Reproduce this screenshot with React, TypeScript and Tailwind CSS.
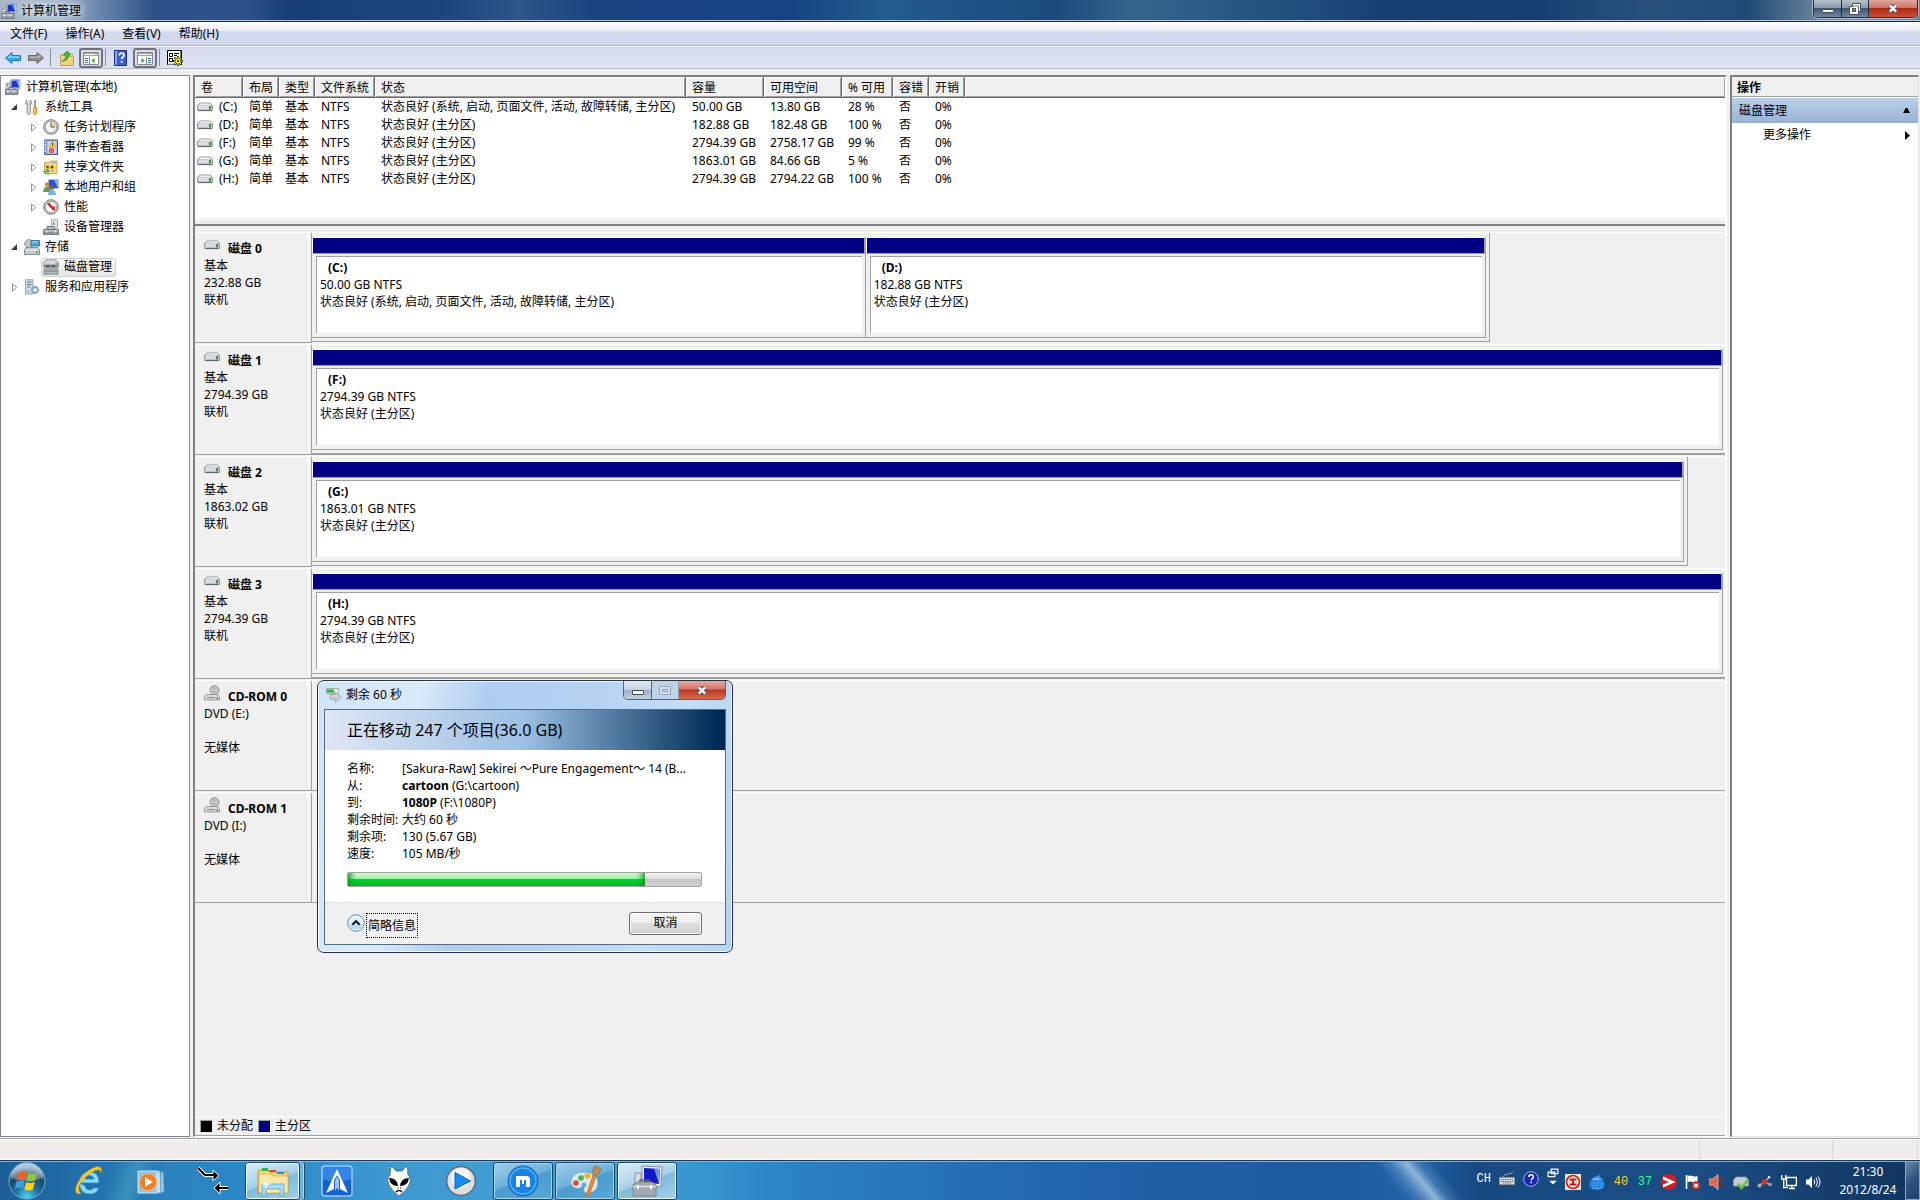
import type { ReactNode } from 'react'
import { clsx } from 'clsx'

interface Volume {
  letter: string
  fs: string
  status: string
  capacity: string
  free: string
  percent: string
}

interface Partition {
  letter: string
  size: string
  status: string
  weight: number
}

interface Disk {
  name: string
  lines: string[]
  width?: number
  partitions?: Partition[]
}

interface TreeNode {
  label: string
  icon: ReactNode
  level: 0 | 1 | 2
  toggle?: 'open' | 'closed'
  selected?: boolean
}

const SYSTEM_STATUS = '状态良好 (系统, 启动, 页面文件, 活动, 故障转储, 主分区)'
const PRIMARY_STATUS = '状态良好 (主分区)'

const volumes: Volume[] = [
  { letter: '(C:)', fs: 'NTFS', status: SYSTEM_STATUS, capacity: '50.00 GB', free: '13.80 GB', percent: '28 %' },
  { letter: '(D:)', fs: 'NTFS', status: PRIMARY_STATUS, capacity: '182.88 GB', free: '182.48 GB', percent: '100 %' },
  { letter: '(F:)', fs: 'NTFS', status: PRIMARY_STATUS, capacity: '2794.39 GB', free: '2758.17 GB', percent: '99 %' },
  { letter: '(G:)', fs: 'NTFS', status: PRIMARY_STATUS, capacity: '1863.01 GB', free: '84.66 GB', percent: '5 %' },
  { letter: '(H:)', fs: 'NTFS', status: PRIMARY_STATUS, capacity: '2794.39 GB', free: '2794.22 GB', percent: '100 %' },
]

const columns = [
  { title: '卷', width: 'w-12' },
  { title: '布局', width: 'w-9' },
  { title: '类型', width: 'w-9' },
  { title: '文件系统', width: 'w-[60px]' },
  { title: '状态', width: 'w-[311px]' },
  { title: '容量', width: 'w-[78px]' },
  { title: '可用空间', width: 'w-[78px]' },
  { title: '% 可用', width: 'w-[51px]' },
  { title: '容错', width: 'w-9' },
  { title: '开销', width: 'w-9' },
  { title: '', width: '' },
]

const disks: Disk[] = [
  {
    name: '磁盘 0',
    lines: ['基本', '232.88 GB', '联机'],
    width: 83.4,
    partitions: [
      { letter: '(C:)', size: '50.00 GB NTFS', status: SYSTEM_STATUS, weight: 553 },
      { letter: '(D:)', size: '182.88 GB NTFS', status: PRIMARY_STATUS, weight: 620 },
    ],
  },
  {
    name: '磁盘 1',
    lines: ['基本', '2794.39 GB', '联机'],
    width: 100,
    partitions: [{ letter: '(F:)', size: '2794.39 GB NTFS', status: PRIMARY_STATUS, weight: 1 }],
  },
  {
    name: '磁盘 2',
    lines: ['基本', '1863.02 GB', '联机'],
    width: 97.4,
    partitions: [{ letter: '(G:)', size: '1863.01 GB NTFS', status: PRIMARY_STATUS, weight: 1 }],
  },
  {
    name: '磁盘 3',
    lines: ['基本', '2794.39 GB', '联机'],
    width: 100,
    partitions: [{ letter: '(H:)', size: '2794.39 GB NTFS', status: PRIMARY_STATUS, weight: 1 }],
  },
  { name: 'CD-ROM 0', lines: ['DVD (E:)', '', '无媒体'] },
  { name: 'CD-ROM 1', lines: ['DVD (I:)', '', '无媒体'] },
]

/* ---------- icons ---------- */

function Icon({ children, className = 'size-4', box = 16 }: { children: ReactNode; className?: string; box?: number }) {
  return (
    <svg viewBox={`0 0 ${box} ${box}`} className={clsx('shrink-0', className)} aria-hidden="true">
      {children}
    </svg>
  )
}

function ComputerIcon() {
  return (
    <Icon>
      <path d="M5.500 .8 15 .2v9.800L5.500 9z" fill="#e4e6ea" stroke="#8b929c" strokeWidth=".7" />
      <path d="M6.500 1.700 14 1.200v7.600L6.500 8z" fill="#1a35d0" />
      <path d="M11 1.400l3-.2v7.600z" fill="#6fa0f5" />
      <path d="M1 4h4v6H1z" fill="#d5d7da" stroke="#8b8f96" strokeWidth=".7" />
      <path d="M2 5h1v2H2z" fill="#36b536" />
      <path d="M0 10.500h13v5H0z" fill="#8e979e" stroke="#6b747b" strokeWidth=".8" />
      <path d="M1 12h11" stroke="#dde3e6" />
      <path d="M3 11.500v2M9 11.500v2" stroke="#fff" />
      <path d="M4 10V8.500h5V10" fill="none" stroke="#6b747b" />
    </Icon>
  )
}

function ToolsIcon() {
  return (
    <Icon>
      <path d="M3 1v3l1.500 1.500L6 4V1c2 1 2 4 .5 5.500V14c0 2-3.500 2-3.500 0V6.500C1 5 1.500 2 3 1z" fill="#d3d6d9" stroke="#7b8186" strokeWidth=".8" />
      <path d="M10.500 1h1v7h-1z" fill="#a9adb1" stroke="#7b8186" strokeWidth=".6" />
      <rect x="9.300" y="8" width="3.500" height="7.500" rx="1.400" fill="#f6b21c" stroke="#b97b0d" strokeWidth=".7" />
      <path d="M10.300 9v5.500" stroke="#ffe48c" strokeWidth=".8" />
    </Icon>
  )
}

function ClockIcon() {
  return (
    <Icon>
      <circle cx="8" cy="8" r="7.300" fill="#d4d5d8" stroke="#75797e" />
      <circle cx="8" cy="8" r="5.600" fill="#f4f8fb" stroke="#8d9298" strokeWidth=".8" />
      <path d="M8 8V2.700A5.300 5.300 0 0 1 13.300 8z" fill="#fbd58b" />
      <path d="M8 3.500V8h4" fill="none" stroke="#4c5a6b" />
    </Icon>
  )
}

function EventIcon() {
  return (
    <Icon>
      <path d="M1.500 1h13v14.500h-13z" fill="#8ea2c8" stroke="#4b6090" />
      <path d="M4.500 2h9v12.500h-9z" fill="#c6d3ea" />
      <path d="M1 3h2M1 6h2M1 9h2M1 12h2" stroke="#fff" />
      <path d="M9.500 2 12.500 8h-6z" fill="#ffd32a" stroke="#c49200" strokeWidth=".5" />
      <path d="M9.500 4v2.500" stroke="#333" strokeWidth=".9" />
      <circle cx="8.500" cy="11.500" r="2.500" fill="#e03a2f" />
      <path d="m7.500 10.500 2 2m0-2-2 2" stroke="#fff" strokeWidth=".8" />
    </Icon>
  )
}

function SharedIcon() {
  return (
    <Icon>
      <path d="M1.500 3.500h5l1-1.500h6.500v12.500H1.500z" fill="#f6d777" stroke="#c39a3b" strokeWidth=".8" />
      <path d="M8.500 3.500h4.500" stroke="#6ba7df" />
      <circle cx="4.500" cy="8" r="1.600" fill="#8d5a2a" />
      <circle cx="9" cy="8" r="1.600" fill="#6e4520" />
      <path d="M2.500 13c0-4 4-4 4 0z" fill="#3fae4b" />
      <path d="M7 13c0-4 4.500-4 4.500 0z" fill="#b9c0c9" />
      <path d="M0 12c2 2 3 3 6 3" fill="none" stroke="#4bb26c" strokeWidth="1.500" />
    </Icon>
  )
}

function UsersIcon() {
  return (
    <Icon>
      <path d="M5.500.5h10v9h-10z" fill="#2b54d6" stroke="#b9bec6" />
      <path d="M11 1h4v8z" fill="#86aef2" />
      <circle cx="4" cy="5.500" r="2.200" fill="#c98d4a" />
      <path d="M0 13c0-7 8-7 8 0z" fill="#6c9a55" />
      <circle cx="9" cy="8.500" r="2.200" fill="#8a6238" />
      <path d="M5 16c0-7 8-7 8 0z" fill="#7db1ea" />
    </Icon>
  )
}

function PerformanceIcon() {
  return (
    <Icon>
      <circle cx="8" cy="8" r="7.300" fill="#d0d1d4" stroke="#75797d" />
      <circle cx="8" cy="8" r="5.600" fill="#fff" stroke="#8b8f94" strokeWidth=".8" />
      <path d="M4.500 5 6 4.500 10 9l1-1 .5 3.500" fill="none" stroke="#d3201b" strokeWidth="1.500" />
      <path d="m5 5 5.500 6" stroke="#d3201b" strokeWidth="1.200" />
    </Icon>
  )
}

function DeviceIcon() {
  return (
    <Icon>
      <path d="M8.500 .8h6V9h-6z" fill="#e8ebed" stroke="#8f959b" strokeWidth=".8" />
      <path d="M10 3h1.500v3H10z" fill="#45ad45" />
      <path d="M4 7.500h7l1 3H3z" fill="#b6bcc2" stroke="#636b73" strokeWidth=".8" />
      <path d="M.5 10.500h15v5H.5z" fill="#87929b" stroke="#636b73" strokeWidth=".8" />
      <path d="M1 12h14" stroke="#d8dfe4" />
      <path d="M4 11.500v2M12 11.500v2" stroke="#fff" />
    </Icon>
  )
}

function StorageIcon() {
  return (
    <Icon>
      <circle cx="4.800" cy="4.800" r="4.200" fill="#c4c9cd" stroke="#82898f" strokeWidth=".8" />
      <circle cx="4.800" cy="4.800" r="1.200" fill="#fff" stroke="#82898f" strokeWidth=".6" />
      <path d="M7 1.500h8.500v5.500H7z" fill="#41a6dc" stroke="#226a94" strokeWidth=".8" />
      <path d="M8 3h6" stroke="#b9e5fb" />
      <path d="M2 8.500h12l1.500 2.500v4.500H.5V11z" fill="#c5cacf" stroke="#70777d" strokeWidth=".8" />
      <path d="M1 11h14" stroke="#f4f5f6" />
      <path d="M12 12h2v2h-2z" fill="#3ec43e" />
    </Icon>
  )
}

function DiskManagementIcon() {
  return (
    <Icon>
      <path d="M3 .8h10l2.500 3v4H.5v-4z" fill="#d4d7da" stroke="#888e93" strokeWidth=".8" />
      <path d="M12.500 4h2v1.500h-2z" fill="#3ec43e" />
      <path d="M.5 5.500h15v3H.5z" fill="#8c9398" />
      <path d="M3 7h3.500m2 0H12" stroke="#222" strokeWidth="1.200" />
      <path d="M2 9h12l1 2v4.200H1V11z" fill="#b3b8bb" stroke="#777d82" strokeWidth=".8" />
      <path d="M1.500 12h13" stroke="#777d82" />
    </Icon>
  )
}

function ServicesIcon() {
  return (
    <Icon>
      <path d="M1.500.7h7.500V15h-7.500z" fill="#d4dbe2" stroke="#8a949e" strokeWidth=".8" />
      <path d="M3 3h4.500M3 5.500h4.500M3 8h3" stroke="#65717d" />
      <path d="M3 12.500h2" stroke="#3ec43e" />
      <circle cx="11" cy="11" r="2.800" fill="#fff" stroke="#7fa6cc" strokeWidth="2" />
      <path d="M11 6.500v2m0 5v2M6.500 11h2m5 0h2M7.800 7.800l1.400 1.400m3.600 3.600 1.400 1.400m0-6.400-1.400 1.400m-3.600 3.600-1.400 1.400" stroke="#7fa6cc" strokeWidth="1.200" />
    </Icon>
  )
}

function DriveIcon() {
  return (
    <Icon>
      <path d="M3 4h10l2.500 2.500v4.200q0 1-1 1h-13q-1 0-1-1V6.500z" fill="#bfc0c8" stroke="#808089" strokeWidth=".8" />
      <path d="M3.300 4.500h9.400l1.800 1.800h-13z" fill="#f1f1f3" />
      <path d="M1.500 7h10v3h-10z" fill="#dcdce6" />
      <path d="M12 7h2v3.500h-2z" fill="#35a033" />
      <path d="M1 11.500h14" stroke="#63636c" strokeWidth=".9" />
    </Icon>
  )
}

function OpticalIcon() {
  return (
    <Icon>
      <circle cx="10.500" cy="5" r="4.500" fill="#c9c9cf" stroke="#85858c" strokeWidth=".8" />
      <path d="m10.500 5 2-4M10.500 5l4 1.500" stroke="#b4a6d4" />
      <path d="m9 1.800 1.500 6" stroke="#6bc46b" strokeWidth="1.300" />
      <circle cx="10.500" cy="5" r="1.200" fill="#fff" stroke="#8c8c92" strokeWidth=".5" />
      <path d="M3 9.500h10.500l2 1.800v3.700H.5v-3.700z" fill="#dcdde2" stroke="#82838b" strokeWidth=".8" />
      <path d="M3 12.700h8" stroke="#6d6d75" strokeWidth=".9" />
      <path d="M12.500 12h1.600v2h-1.600z" fill="#35a033" />
    </Icon>
  )
}

function BackIcon() {
  return (
    <Icon>
      <path d="M.5 8 7 2.500V5.500h8.500v5H7v3z" fill="#35aaf2" stroke="#136fae" strokeWidth=".9" strokeLinejoin="round" />
      <path d="M2.500 7.700 6 4.800V6.500h8.500v1.200z" fill="#9bdcff" />
    </Icon>
  )
}

function ForwardIcon() {
  return (
    <Icon>
      <path d="M15.500 8 9 2.500V5.500H.5v5H9v3z" fill="#8f8f8f" stroke="#5f5f5f" strokeWidth=".9" strokeLinejoin="round" />
      <path d="M13.500 7.700 10 4.800V6.500H1.500v1.200z" fill="#b9b9b9" />
    </Icon>
  )
}

function FolderUpIcon() {
  return (
    <Icon>
      <path d="M1.500 5h5l1 1h7v9.500h-13z" fill="#f4d27a" stroke="#c09a46" strokeWidth=".9" />
      <path d="M9.500 3.500h4v2.500h-4z" fill="#fff4c4" stroke="#c09a46" strokeWidth=".6" />
      <path d="M3 11c3-1 4-3 3.500-6H4L8 1l4 4H9.500C9.500 9 7 11 3 11z" fill="#3dba3d" stroke="#1b7f1b" strokeWidth=".6" />
    </Icon>
  )
}

function PaneIcon({ flip }: { flip?: boolean }) {
  return (
    <Icon>
      <path d="M.5 2.500h15v12H.5z" fill="#fff" stroke="#868686" />
      <path d="M1 3h14v3H1z" fill="#a5a5a5" />
      <path d="M1 4.500h10m1 0h1m1 0h1" stroke="#fff" />
      {flip ? (
        <>
          <path d="M9.500 7v7" stroke="#868686" />
          <path d="M11 8.500h3M11 10.500h3M11 12.500h3" stroke="#3e6bb5" />
          <path d="M4.500 8v5l3-2.500z" fill="#23a923" />
        </>
      ) : (
        <>
          <path d="M6.500 7v7" stroke="#868686" />
          <path d="M2 8.500h3M2 10.500h3M2 12.500h3" stroke="#3e6bb5" />
          <path d="M11.500 8v5l-3-2.500z" fill="#23a923" />
        </>
      )}
    </Icon>
  )
}

function HelpIcon() {
  return (
    <Icon>
      <path d="M1.500.5h12v15h-12z" fill="#3b5fd0" stroke="#1d2f8b" />
      <path d="M2 1h2v14H2z" fill="#8ba7ef" />
      <path d="M6.300 5.500q0-2.300 2.300-2.300t2.300 2q0 1.300-1.200 2-1 .6-1 2" fill="none" stroke="#fff" strokeWidth="1.700" />
      <path d="M7.800 11h1.800v1.800H7.800z" fill="#fff" />
    </Icon>
  )
}

function SettingsIcon() {
  return (
    <Icon>
      <path d="M.5.500h14v14H.5z" fill="#fff" stroke="#000" />
      <path d="M13.500 1v13.500H1" fill="none" stroke="#808080" />
      <path d="M2.500 3.500h3v3h-3zm0 5h3v3h-3z" fill="none" stroke="#000" />
      <path d="M7 3.500h5M7 5.500h3M7 8.500h2" stroke="#000" />
      <path d="M11 6v10M6 11h10M7.500 7.500l7 7m0-7-7 7" stroke="#000" strokeWidth="2" />
      <circle cx="11" cy="11" r="3" fill="#fff200" stroke="#000" strokeWidth=".6" />
      <path d="M11 6.500v2m0 5v2M6.500 11h2m5 0h2M8 8l1 1m4 4 1 1m0-6-1 1m-4 4-1 1" stroke="#fff200" strokeWidth="1.200" />
      <circle cx="11" cy="11" r="1" fill="#000" />
    </Icon>
  )
}

const tree: TreeNode[] = [
  { label: '计算机管理(本地)', icon: <ComputerIcon />, level: 0 },
  { label: '系统工具', icon: <ToolsIcon />, level: 1, toggle: 'open' },
  { label: '任务计划程序', icon: <ClockIcon />, level: 2, toggle: 'closed' },
  { label: '事件查看器', icon: <EventIcon />, level: 2, toggle: 'closed' },
  { label: '共享文件夹', icon: <SharedIcon />, level: 2, toggle: 'closed' },
  { label: '本地用户和组', icon: <UsersIcon />, level: 2, toggle: 'closed' },
  { label: '性能', icon: <PerformanceIcon />, level: 2, toggle: 'closed' },
  { label: '设备管理器', icon: <DeviceIcon />, level: 2 },
  { label: '存储', icon: <StorageIcon />, level: 1, toggle: 'open' },
  { label: '磁盘管理', icon: <DiskManagementIcon />, level: 2, selected: true },
  { label: '服务和应用程序', icon: <ServicesIcon />, level: 1, toggle: 'closed' },
]

/* ---------- window frame ---------- */

function CloseGlyph() {
  return (
    <Icon className="h-[11px] w-3" box={12}>
      <path d="m2.500 2.500 7 7m0-7-7 7" stroke="#4b4f5c" strokeWidth="4.600" />
      <path d="m2.500 2.500 7 7m0-7-7 7" stroke="#fff" strokeWidth="2.600" />
    </Icon>
  )
}

function TitleBar() {
  return (
    <header className="flex h-[22px] shrink-0 items-start justify-between border-b border-[#1b2c48] bg-[linear-gradient(90deg,#aab9ca_0%,#a3b4c8_3%,#6e8ab0_5%,#2e5188_8%,#2c5189_13%,#173e77_15%,#1c4580_23%,#2d5689_27%,#1a4480_31%,#164380_41%,#225c90_46%,#1b4a7c_55%,#34668d_59%,#255682_65%,#164072_72%,#153f70_80%,#28527c_86%,#1f4a75_91%,#8397aa_96%,#6e7f92_100%)] shadow-[inset_0_-1px_0_#b7c8dd]">
      <div className="flex h-[21px] items-center gap-1 pl-px">
        <ComputerIcon />
        <h1 className="text-xs leading-5 [text-shadow:0_0_6px_#fff,0_0_10px_#fff]">计算机管理</h1>
      </div>
      <div className="mr-0.5 flex h-[18px] overflow-hidden rounded-b-[5px] border border-t-0 border-[#25303d] shadow-[0_0_0_1px_#a9b9c9]">
        <button type="button" aria-label="最小化" className="flex w-7 items-center justify-center border-r border-[#25303d] bg-[linear-gradient(#b9c3ce_0%,#8796a7_48%,#3f566e_50%,#7488a0_100%)]">
          <span className="mt-1 h-1 w-3 rounded-[1px] border border-[#454d5b] bg-white" />
        </button>
        <button type="button" aria-label="还原" className="flex w-[27px] items-center justify-center border-r border-[#25303d] bg-[linear-gradient(#b9c3ce_0%,#8796a7_48%,#3f566e_50%,#7488a0_100%)]">
          <Icon className="size-3" box={12}>
            <path d="M3.500.5h8v8h-2v3h-9v-8h3z" fill="#fff" stroke="#454d5b" />
            <path d="M3.500 5.500h3v3h-3z" fill="#7c8a9a" stroke="#454d5b" />
            <path d="M3 3h6.500v5.500" fill="none" stroke="#454d5b" strokeWidth=".8" />
          </Icon>
        </button>
        <button type="button" aria-label="关闭" className="flex w-12 items-center justify-center bg-[linear-gradient(#e0a69b_0%,#cd7a6b_44%,#b32a15_50%,#c9503a_100%)]">
          <CloseGlyph />
        </button>
      </div>
    </header>
  )
}

function MenuBar() {
  return (
    <nav className="flex h-6 shrink-0 items-center gap-[18px] border-b border-[#aeb0bb] bg-[linear-gradient(#fff_0%,#e8ecf6_38%,#d4daed_42%,#d4daed_100%)] pl-2.5">
      {['文件(F)', '操作(A)', '查看(V)', '帮助(H)'].map((item) => (
        <button key={item} type="button">
          {item}
        </button>
      ))}
    </nav>
  )
}

function Separator() {
  return <span className="h-[17px] w-px bg-[#8b8d98]" />
}

function ToolBar() {
  const pressed = 'flex h-5 w-6 items-center justify-center rounded-[3px] border-2 border-[#6e7280] bg-[#dcdfe8]'
  return (
    <div className="flex h-[23px] shrink-0 items-center border-t border-b border-t-[#f7f8fc] border-b-[#b3b6ca] bg-[linear-gradient(#d4daed,#dfe4f5)] pl-[5px]">
      <button type="button" aria-label="后退"><BackIcon /></button>
      <button type="button" aria-label="前进" className="ml-[7px] mr-1.5"><ForwardIcon /></button>
      <Separator />
      <button type="button" aria-label="向上" className="ml-2 mr-1"><FolderUpIcon /></button>
      <button type="button" aria-label="显示控制台树" className={pressed}><PaneIcon /></button>
      <span className="w-0.5" />
      <Separator />
      <button type="button" aria-label="帮助" className="mr-1 ml-[7px]"><HelpIcon /></button>
      <button type="button" aria-label="显示操作窗格" className={pressed}><PaneIcon flip /></button>
      <span className="w-0.5" />
      <Separator />
      <button type="button" aria-label="设置" className="ml-[7px]"><SettingsIcon /></button>
    </div>
  )
}

function ConsoleTree() {
  return (
    <aside className="w-[190px] shrink-0 border border-[#828790] bg-white pt-px">
      <ul>
        {tree.map((node) => (
          <li
            key={node.label}
            className={clsx('flex h-5 items-center', node.level === 0 && 'pl-0.5', node.level === 1 && 'pl-[5px]', node.level === 2 && 'pl-6')}
          >
            {node.level > 0 && (
              <span className="flex w-4 justify-center">
                {node.toggle === 'open' && (
                  <Icon className="size-2" box={8}>
                    <path d="M7 1v6H1z" fill="#3b3b3b" />
                  </Icon>
                )}
                {node.toggle === 'closed' && (
                  <Icon className="size-[9px]" box={9}>
                    <path d="M2.500.8v7.400L6.800 4.500z" fill="#fff" stroke="#949494" />
                  </Icon>
                )}
              </span>
            )}
            <button
              type="button"
              className={clsx(
                'flex h-[19px] items-center gap-[5px] rounded-[2px] border pl-px pr-[3px]',
                node.selected ? 'border-[#d4d4d4] bg-[linear-gradient(#f9f9f9,#e6e6e6)]' : 'border-transparent',
              )}
            >
              {node.icon}
              {node.label}
            </button>
          </li>
        ))}
      </ul>
    </aside>
  )
}

function VolumeTable() {
  return (
    <div className="h-[141px] shrink-0 bg-white">
      <table className="w-full table-fixed border-separate border-spacing-0 text-left">
        <thead>
          <tr className="h-[21px] bg-[#f0f0f0]">
            {columns.map((col, i) => (
              <th
                key={i}
                scope="col"
                className={clsx(
                  'border-b border-[#696969] p-0 font-normal shadow-[inset_1px_1px_0_#fff,inset_-1px_-1px_0_#a0a0a0]',
                  col.width,
                  col.title && 'border-r pt-0.5 pl-1.5',
                )}
              >
                <span className="whitespace-nowrap">{col.title}</span>
              </th>
            ))}
          </tr>
        </thead>
        <tbody>
          {volumes.map((v) => (
            <tr key={v.letter} className="h-[18px] whitespace-nowrap [&>td]:p-0 [&>td]:pl-1.5">
              <td>
                <span className="-ml-1 flex items-center gap-1.5">
                  <DriveIcon />
                  {v.letter}
                </span>
              </td>
              <td>简单</td>
              <td>基本</td>
              <td>{v.fs}</td>
              <td>{v.status}</td>
              <td>{v.capacity}</td>
              <td>{v.free}</td>
              <td>{v.percent}</td>
              <td>否</td>
              <td>0%</td>
              <td />
            </tr>
          ))}
        </tbody>
      </table>
    </div>
  )
}

function PartitionBox({ partition }: { partition: Partition }) {
  return (
    <div className="flex min-w-0 basis-0 flex-col" style={{ flexGrow: partition.weight }}>
      <div className="h-[17px] border-t border-r-2 border-b border-l border-t-white border-r-[#a0a0a0] border-b-[#a0a0a0] border-l-white bg-[#000080]" />
      <div className="flex-1 border-r border-b border-[#a0a0a0] pt-0.5 pr-[3px] pb-1 pl-1">
        <div className="h-full overflow-hidden border-t border-l border-[#a0a0a0] bg-white pt-0.5 pl-[3px] leading-[17px] whitespace-nowrap">
          <div className="pl-2 font-bold">{partition.letter}</div>
          <div>{partition.size}</div>
          <div>{partition.status}</div>
        </div>
      </div>
    </div>
  )
}

function DiskRow({ disk }: { disk: Disk }) {
  return (
    <section className="mb-px flex h-[111px] shrink-0">
      <div className="w-[117px] shrink-0 border-t border-b border-t-white border-b-[#a0a0a0] pl-[9px] leading-[17px] shadow-[inset_-1px_0_0_#a0a0a0,inset_-3px_0_0_#f0f0f0,inset_-4px_0_0_#fff]">
        <div className="flex h-6 gap-2">
          <span className="pt-1">{disk.partitions ? <DriveIcon /> : <OpticalIcon />}</span>
          <h2 className="pt-[7px] font-bold">{disk.name}</h2>
        </div>
        {disk.lines.map((line, i) => (
          <div key={i} className="h-[17px]">
            {line}
          </div>
        ))}
      </div>
      <div className={clsx('flex-1 border-t border-b border-t-white', disk.width === 100 || !disk.width ? 'border-b-[#a0a0a0]' : 'border-b-transparent')}>
        {disk.partitions && (
          <div
            className={clsx('flex h-[109px] border-b border-[#a0a0a0] pt-1 pb-[3px]', disk.width === 100 ? 'pr-0.5' : 'border-r pr-[3px]')}
            style={{ width: `${disk.width}%` }}
          >
            {disk.partitions.map((p) => (
              <PartitionBox key={p.letter} partition={p} />
            ))}
          </div>
        )}
      </div>
    </section>
  )
}

function Legend() {
  return (
    <footer className="flex h-5 shrink-0 items-center gap-[5px] border-t border-b border-t-white border-b-[#a0a0a0] pl-[5px]">
      <span className="size-3 border-t border-l border-[#a0a0a0] bg-black" />
      <span>未分配</span>
      <span className="size-3 border-t border-l border-[#a0a0a0] bg-[#000080]" />
      <span>主分区</span>
    </footer>
  )
}

function ActionsPane() {
  return (
    <aside className="flex w-[189px] shrink-0 flex-col border-t-2 border-r border-b border-l-2 border-t-[#808080] border-r-[#e3e3e3] border-b-[#e3e3e3] border-l-[#808080] bg-white">
      <h2 className="h-5 border-b border-[#a0a0a0] bg-[#f0f0f0] pl-[5px] leading-[21px] font-bold">操作</h2>
      <button type="button" className="mt-px flex h-[25px] items-center justify-between bg-[linear-gradient(#b8d0ea,#9ab3d3)] pr-[7px] pl-[7px]">
        磁盘管理
        <Icon className="h-[5px] w-[9px]" box={8}>
          <path d="m4-3 6 12H-2z" />
        </Icon>
      </button>
      <button type="button" className="flex h-6 items-center justify-between pr-[7px] pl-[31px]">
        更多操作
        <Icon className="size-[9px]" box={9}>
          <path d="M3 0v9l5-4.500z" />
        </Icon>
      </button>
    </aside>
  )
}

/* ---------- move dialog ---------- */

function MoveDialog() {
  const rows: [string, ReactNode][] = [
    ['名称:', '[Sakura-Raw] Sekirei ～Pure Engagement～ 14 (B...'],
    ['从:', <><b>cartoon</b> (G:\cartoon)</>],
    ['到:', <><b>1080P</b> (F:\1080P)</>],
    ['剩余时间:', '大约 60 秒'],
    ['剩余项:', '130 (5.67 GB)'],
    ['速度:', '105 MB/秒'],
  ]
  return (
    <div
      role="dialog"
      aria-label="剩余 60 秒"
      className="absolute top-[680px] left-[317px] flex w-[416px] flex-col rounded-[7px] border border-[#28323e] bg-[linear-gradient(100deg,#cfe3f8_0%,#dbeafa_22%,#aecdf0_38%,#b5d2f2_60%,#c3ddf6_80%,#b4d3f3_100%)] px-1.5 pb-[7px] shadow-[inset_0_0_0_1px_#f2f8fe]"
    >
      <div className="flex h-7 items-start justify-between">
        <div className="flex h-7 items-center gap-1 pl-0.5">
          <Icon>
            <path d="M.5 1.500h12v5H.5z" fill="#e6ece6" stroke="#97a097" strokeWidth=".8" />
            <path d="M1 2.500h7v3H1z" fill="#17b93b" />
            <path d="M4 7.500h5V5l6.500 5L9 15.500V12H4z" fill="#cdd0d3" stroke="#9a9fa3" strokeWidth=".8" />
          </Icon>
          <span>剩余 60 秒</span>
        </div>
        <div className="flex h-[19px] overflow-hidden rounded-b-[5px] border border-t-0 border-[#56626f]">
          <button type="button" aria-label="最小化" className="flex w-7 items-center justify-center border-r border-[#56626f] bg-[linear-gradient(#dfe9f3_0%,#c6d4e2_48%,#9cb0c5_50%,#bdd0e3_100%)]">
            <span className="mt-1 h-[5px] w-3 rounded-[1px] border border-[#454d5b] bg-white" />
          </button>
          <button type="button" aria-label="最大化" disabled className="flex w-[27px] items-center justify-center border-r border-[#8b9cae] bg-[#bfd3e8]">
            <span className="flex h-[9px] w-3 items-center justify-center rounded-[1px] border border-[#91a3b6] bg-[#d5e2ee]">
              <span className="h-[3px] w-1.5 border border-[#91a3b6]" />
            </span>
          </button>
          <button type="button" aria-label="关闭" className="flex w-[46px] items-center justify-center bg-[linear-gradient(#e7aa9f_0%,#d5796a_44%,#b83823_50%,#d8694f_100%)]">
            <CloseGlyph />
          </button>
        </div>
      </div>
      <div className="border border-[#5a6b7e] bg-white">
        <h2 className="flex h-10 items-center bg-[linear-gradient(90deg,#dfe6f5_0%,#9bbfe3_50%,#002b55_98%)] pl-[22px] text-base">
          正在移动 247 个项目(36.0 GB)
        </h2>
        <dl className="grid grid-cols-[55px_1fr] pt-2.5 pl-[22px] leading-[17px] whitespace-nowrap">
          {rows.map(([label, value]) => (
            <div key={label} className="contents">
              <dt>{label}</dt>
              <dd>{value}</dd>
            </div>
          ))}
        </dl>
        <div
          role="progressbar"
          aria-valuenow={84}
          className="mr-[23px] mt-2.5 mb-[15px] ml-[22px] h-[15px] overflow-hidden rounded-[2px] border border-[#a3a3a3] bg-[linear-gradient(#f3f3f3_0%,#dedede_45%,#c5c5c5_50%,#d2d2d2_100%)]"
        >
          <div
            className="h-full bg-[linear-gradient(#d2fbd2_0%,#a5f3a8_42%,#05d62a_48%,#05d62a_75%,#3fe45c_100%)] shadow-[inset_6px_-3px_6px_-3px_#079c1e,inset_-6px_-3px_6px_-3px_#079c1e]"
            style={{ width: '84.2%' }}
          />
        </div>
        <div className="flex h-[42px] items-center justify-between border-t border-[#dfdfdf] bg-[#f0f0f0] pr-[23px] pb-px pl-[22px]">
          <button type="button" className="flex items-center gap-px">
            <Icon className="size-[18px]" box={18}>
              <circle cx="9" cy="9" r="8.300" fill="#e3f1fa" stroke="#5b93bd" />
              <path d="M2 10a7.300 7.300 0 0 0 14 0z" fill="#bcdcf0" />
              <path d="m5.300 10.800 3.700-3.600 3.700 3.600" fill="none" stroke="#1a1a1a" strokeWidth="2" />
            </Icon>
            <span className="mt-1 border border-dotted border-black px-px leading-[23px]">简略信息</span>
          </button>
          <button type="button" className="h-[23px] w-[73px] rounded-[3px] border border-[#707070] bg-[linear-gradient(#f4f4f4_0%,#ebebeb_48%,#dddddd_50%,#cfcfcf_100%)] shadow-[inset_0_0_0_1px_#fafafa]">
            取消
          </button>
        </div>
      </div>
    </div>
  )
}

/* ---------- taskbar ---------- */

function TaskSlot({ label, open, stacked, active, children }: { label: string; open?: boolean; stacked?: boolean; active?: boolean; children: ReactNode }) {
  return (
    <button
      type="button"
      aria-label={label}
      className={clsx('flex h-[38px] w-[60px]', stacked && 'rounded-[3px] border-r border-[#17476a] bg-[#6db3da] pr-1 shadow-[inset_-1px_0_0_#a9d5ed]')}
    >
      <span
        className={clsx(
          'flex h-full flex-1 items-center justify-center rounded-[3px] border',
          !open && 'border-transparent',
          open && !active && 'border-[#17476a] bg-[linear-gradient(160deg,#a0cee8_0%,#6fb2db_45%,#4a9dce_52%,#58a9d5_100%)] shadow-[inset_0_0_0_1px_#a9d5ed]',
          active && 'border-[#17476a] bg-[linear-gradient(160deg,#dceef8_0%,#a8d1e8_48%,#7fbbdd_54%,#a3d2e9_100%)] shadow-[inset_0_0_0_1px_#e6f5fc]',
        )}
      >
        {children}
      </span>
    </button>
  )
}

function StartOrb() {
  return (
    <button type="button" aria-label="开始" className="w-[59px] pl-2">
      <Icon className="size-[38px]" box={38}>
        <defs>
          <radialGradient id="orb" cx="50%" cy="95%" r="85%">
            <stop offset="0" stopColor="#4fd3f2" />
            <stop offset=".4" stopColor="#1c6f9f" />
            <stop offset=".75" stopColor="#1d4666" />
            <stop offset="1" stopColor="#8fb1c6" />
          </radialGradient>
        </defs>
        <circle cx="19" cy="19" r="18" fill="url(#orb)" stroke="#6fb0d4" />
        <path d="M3 16a16 16 0 0 1 32 0q-16 6-32 0z" fill="#fff" opacity=".3" />
        <path d="M10.500 11q4-3 8.500-.5L17.200 18q-4-2-8.600.4z" fill="#f0602a" />
        <path d="M20.300 11q4 2.400 9 0l-2 7.300q-4.400 2.300-8.700.2z" fill="#8dc63f" />
        <path d="M8.200 19.800q4.400-2.500 8.600-.4L15 26.800q-4-2.300-8.500.4z" fill="#3d9be0" />
        <path d="M18.100 19.900q4.500 2.200 8.800 0l-2 7.500q-4.500 2.500-8.700-.2z" fill="#fcd116" />
      </Icon>
    </button>
  )
}

function TaskBar() {
  return (
    <footer className="flex h-10 shrink-0 border-t border-[#1b3a5c] bg-[linear-gradient(50deg,transparent_72%,#8fb7da55_72.800%,#a9cbe8cc_73.600%,#7fabd655_74.200%,transparent_75%),linear-gradient(110deg,transparent_6%,#5fc0c955_7.200%,transparent_8%),linear-gradient(90deg,#1c5e97_0%,#2272ad_5%,#2c83bd_9%,#2a86c4_12%,#3c98cf_20%,#45a1d3_32%,#3594cf_37%,#2c86c6_40%,#256fb4_50%,#1f5fa6_60%,#1d5ba0_70%,#2062a8_73%,#1e5c9f_74.500%,#174a80_77%,#1a4d84_88%,#12345f_100%)] shadow-[inset_0_1px_0_#7fb3d6]">
      <StartOrb />
      <div className="flex items-start gap-0.5 pt-px">
        <TaskSlot label="Internet Explorer">
          <Icon className="size-8" box={32}>
            <path d="M7 18h19q.5-11-9.500-11Q6.500 7 6.500 18T17 29q7 0 9-6h-5.500q-1 2-3.700 2-4.300 0-4.600-4zM12 14q.7-3.500 4.500-3.500T21 14z" fill="#8bdcfb" stroke="#2a8bc4" strokeWidth=".9" fillRule="evenodd" />
            <path d="M5 29C-2 26 8 8 20 3c7-3 10-.5 7.500 5 .5-4-3-4-8-1C9 13 2 24 8 28z" fill="#fcc92c" stroke="#c98d0b" strokeWidth=".6" />
          </Icon>
        </TaskSlot>
        <TaskSlot label="Windows Media Player">
          <Icon className="size-8" box={32}>
            <path d="M22 6h3l1 22h-4z" fill="#c2dff0" stroke="#6da6c8" strokeWidth=".8" />
            <path d="M26 7h2l1 20h-3z" fill="#a5cfe8" stroke="#6da6c8" strokeWidth=".8" />
            <path d="M3 6h19v22H3z" fill="#8fc3e2" stroke="#d4ebf7" />
            <circle cx="13" cy="17" r="8.500" fill="#f47b20" stroke="#fbb77b" />
            <path d="M10 12v10l8-5z" fill="#fff" />
          </Icon>
        </TaskSlot>
        <TaskSlot label="网络连接">
          <Icon className="size-8" box={32}>
            <path d="m1 3 7 7h11M31 23H20" fill="none" stroke="#fff" strokeWidth="4" />
            <path d="m16 5 6 5.500-6 5.500zM23 17l-6 6 6 6z" stroke="#fff" />
            <path d="m1 3 7 7h11M31 23H20" fill="none" stroke="#000" strokeWidth="2" />
          </Icon>
        </TaskSlot>
        <TaskSlot label="资源管理器" open stacked active>
          <Icon className="size-8" box={32}>
            <path d="M1 5h10l2 2h18v21H1z" fill="#f1d477" stroke="#b58e38" strokeWidth=".8" />
            <path d="M5 3h6v3H5z" fill="#2eb446" />
            <path d="M12 5h7v2h-7z" fill="#e2452c" />
            <path d="M20 7h7v2h-7z" fill="#2a8fe0" />
            <path d="M2 9h12l2 2h15v17H2z" fill="#fae9a6" stroke="#cda84e" strokeWidth=".6" />
            <path d="M5 31V19h22v12h-4v-7H9v7z" fill="#a8daf3" stroke="#5d9fc4" strokeWidth=".8" />
            <path d="m9 13 1 5 5 1-5 1-1 5-1-5-5-1 5-1z" fill="#fff" />
          </Icon>
        </TaskSlot>
        <TaskSlot label="导航">
          <Icon className="size-8" box={32}>
            <rect x="1" y="1" width="30" height="30" rx="3" fill="#1363d2" stroke="#9ec8f6" strokeWidth="1.500" />
            <path d="M2 2h28v12Q16 20 2 14z" fill="#4b9bf2" opacity=".6" />
            <path d="M16 4 27 28l-8-4V15l-3-5-3 5v9l-8 4z" fill="#fff" />
            <path d="m16 12 2 5v9l-2-3-2 3v-9z" fill="#fff" opacity=".6" />
          </Icon>
        </TaskSlot>
        <TaskSlot label="foobar2000">
          <Icon className="size-8" box={32}>
            <path d="M8 1q3 2 5 5h6q2-3 5-5 1 5 1 9 4 4 1 10-3 6-10 11Q9 26 6 20 3 14 7 10q0-4 1-9z" fill="#fff" stroke="#335f7a" strokeWidth=".8" />
            <path d="M6 13q8 0 9 8-8 0-9-8zM26 13q-8 0-9 8 8 0 9-8z" />
            <path d="M13 27q3-3 6 0" fill="none" stroke="#000" strokeWidth="1.500" />
            <path d="M15 22.500v1M17.500 22.500v1" stroke="#000" />
          </Icon>
        </TaskSlot>
        <TaskSlot label="播放器">
          <Icon className="size-8" box={32}>
            <circle cx="16" cy="16" r="14.300" fill="#dcdfe1" stroke="#59636b" strokeWidth="1.300" />
            <circle cx="16" cy="13" r="10" fill="#f3f4f5" />
            <path d="M10 7.500v16.500L25.500 16z" fill="#168df0" stroke="#0b63b5" />
          </Icon>
        </TaskSlot>
        <TaskSlot label="傲游浏览器" open>
          <Icon className="size-8" box={32}>
            <circle cx="16" cy="16" r="15.500" fill="#1c6fcf" />
            <circle cx="16" cy="16" r="13" fill="#1a84e4" stroke="#4fbaf6" strokeWidth="1.500" />
            <path d="M9 22V11h12l2 2v9h-4v-7h-2v4h-2v-4h-2v7z" fill="#fff" />
          </Icon>
        </TaskSlot>
        <TaskSlot label="画图" open>
          <Icon className="size-8" box={32}>
            <path d="M14 7q14 0 15 10 0 11-11 11-4 0-3-4 0-3-3-2-2 3-6 1-5-2-4-8 3-8 12-8z" fill="#d8e9f5" stroke="#7c9fb9" strokeWidth=".8" />
            <circle cx="7" cy="18" r="2.800" fill="#e1442f" />
            <circle cx="12" cy="13" r="2.800" fill="#48b73c" />
            <circle cx="18.500" cy="11" r="2.800" fill="#f5ae24" />
            <circle cx="15" cy="20" r="2.500" fill="#68acd4" />
            <path d="m17 31 7-21 3 1-7 20z" fill="#f08a24" stroke="#b25b10" strokeWidth=".6" />
            <path d="M24 10q-1-6 2-9 4 1 6 3-1 4-5 7z" fill="#b98a5a" stroke="#8a6035" strokeWidth=".6" />
          </Icon>
        </TaskSlot>
        <TaskSlot label="计算机管理" open active>
          <Icon className="size-8" box={32}>
            <path d="m11 1 20 1-1 20-19-3z" fill="#e7eaee" stroke="#8b929c" />
            <path d="m13 3 16 1-1 15-15-2z" fill="#1219c4" />
            <path d="m23 3.500 6 .5-1 15z" fill="#6f95ee" />
            <path d="M4 8h6v10H4z" fill="#d9dbde" stroke="#8a9099" />
            <path d="m2 20 4-3h15l4 3v11H2z" fill="#a3abb1" stroke="#7b848b" />
            <path d="M2 21.500h23" stroke="#dde3e7" strokeWidth="1.500" />
            <path d="M9 17v-2h9v2" fill="none" stroke="#5e676e" strokeWidth="1.500" />
            <path d="M7 20v4m13-4v4" stroke="#fff" strokeWidth="2" />
          </Icon>
        </TaskSlot>
      </div>
      <div className="ml-auto flex items-center">
        <div className="flex items-center gap-2 pb-1 font-['Liberation_Mono',monospace] text-white">
          <span>CH</span>
          <Icon>
            <path d="M4 6q1-3 5-3t5-2" fill="none" stroke="#9fa8b0" />
            <path d="M.5 6.500h15v7H.5z" fill="#dadde0" stroke="#8d949a" />
            <path d="M2 8.500h12M2 10.500h12M4 12h8" stroke="#666d74" strokeDasharray="1.200 .6" />
          </Icon>
          <Icon>
            <circle cx="8" cy="8" r="7.300" fill="#1527b4" stroke="#a9b5dc" />
            <path d="M5.800 6q0-2.300 2.300-2.300T10.300 6q0 1.200-1.200 1.800-.9.500-.9 1.700" fill="none" stroke="#fff" strokeWidth="1.500" />
            <path d="M7.400 10.700H9v1.500H7.400z" fill="#fff" />
          </Icon>
          <Icon className="-mt-1 mr-1 h-[18px] w-3" box={16}>
            <path d="M5.500-2.500h9v6h-9zM1.500 1.500h9v6h-9z" fill="#1b4d84" stroke="#fff" strokeWidth="1.500" />
            <path d="M3 13h10l-5 5z" fill="#fff" />
          </Icon>
        </div>
        <div className="flex items-center gap-2 pt-0.5 pl-0.5">
          <Icon>
            <path d="M0 0h16v16H0z" fill="#f3e6cf" />
            <circle cx="8" cy="8" r="6.500" fill="none" stroke="#c31924" strokeWidth="1.600" />
            <path d="M4.500 4.500h7v2h-7zm0 5h7v2h-7zM7 6h2v4H7z" fill="#c31924" />
          </Icon>
          <Icon>
            <path d="M0 12h16v4H0z" fill="#1038a8" />
            <path d="M1 14q-1-6 2-9 2-3 6-3l1-2q1 1 1 3 5 2 4 11-7 4-14 0z" fill="#3c9ae8" stroke="#1d62c4" strokeWidth=".7" />
            <path d="M3 7.500h11M2 10h12M2 12.500h12" stroke="#0d42a8" strokeDasharray="1 1" />
            <path d="M4 5h6" stroke="#9ad4fb" />
          </Icon>
          <span className="w-4 text-center font-['Liberation_Mono',monospace] leading-4 text-[#ffd22e]">40</span>
          <span className="w-4 text-center font-['Liberation_Mono',monospace] leading-4 text-[#2dfb93]">37</span>
          <Icon>
            <circle cx="8" cy="8" r="8" fill="#cf1f27" />
            <path d="M2 2.500 14.500 8 2 13.500v-3L8 8 2 5.500z" fill="#fff" />
          </Icon>
          <Icon>
            <path d="M1.500 1v14" stroke="#fff" strokeWidth="1.600" />
            <path d="M2.500 2q3-1 5 0t5 0v6q-3 1-5 0t-5 0z" fill="#fff" />
            <circle cx="11" cy="11.500" r="4.300" fill="#d8261c" />
            <path d="m9.200 9.700 3.600 3.600m0-3.600-3.600 3.600" stroke="#fff" strokeWidth="1.400" />
          </Icon>
          <Icon>
            <path d="M0 5h3.500L9 .5v15L3.500 11H0z" fill="#e2664a" stroke="#f0b9a5" strokeWidth=".8" />
            <path d="M11 5q2 3 0 6m2-8q3.500 5 0 10" fill="none" stroke="#7e3122" strokeWidth="1.200" />
          </Icon>
          <Icon>
            <path d="M3 3h10l2.500 3v6H.5V6z" fill="#c9cdd0" stroke="#8f9599" strokeWidth=".8" />
            <path d="m5 9.500 3.500 4.500L15 6" fill="none" stroke="#5fc53c" strokeWidth="2.600" />
          </Icon>
          <Icon>
            <path d="m2 12 5-4 6-5M8 8l5 3" stroke="#b9c0c5" strokeWidth="1.400" />
            <circle cx="7.500" cy="8" r="2.800" fill="#d9331f" />
            <circle cx="2.500" cy="11.500" r="2" fill="#aab2b8" />
            <circle cx="12" cy="3" r="1.300" fill="#dfe4e8" />
            <circle cx="13" cy="10.500" r="1.800" fill="#9aa3a9" />
          </Icon>
          <Icon>
            <path d="M5.500 3.500h10v8h-10z" fill="#174174" stroke="#fff" strokeWidth="1.400" />
            <path d="M8 14.500h6M11 12v2" stroke="#fff" strokeWidth="1.400" />
            <path d="M.7 1v4h4V1M2.700 5v8.500H7" fill="none" stroke="#fff" strokeWidth="1.300" />
          </Icon>
          <Icon>
            <path d="M1 5.500h2.500L7 2v12l-3.500-3.500H1z" fill="#fff" />
            <path d="M9 5.500q1.500 2.500 0 5m2-7q3 4.500 0 9m2-10q4 5.500 0 11" fill="none" stroke="#fff" />
          </Icon>
        </div>
        <time className="w-[84px] pt-px pl-2.5 text-center leading-[18px] text-white">
          21:30
          <br />
          2012/8/24
        </time>
        <button type="button" aria-label="显示桌面" className="h-full w-[15px] border border-[#8ba3bd] bg-[linear-gradient(135deg,#6b88a8_0%,#31527c_50%,#1d3e69_100%)]" />
      </div>
    </footer>
  )
}

export default function App() {
  return (
    <div className="relative flex h-screen w-full flex-col overflow-hidden bg-[#f0f0f0] font-['Noto_Sans','Noto_Sans_CJK_SC',sans-serif] text-xs leading-4 text-black">
      <TitleBar />
      <MenuBar />
      <ToolBar />
      <main className="flex min-h-0 flex-1 pt-1.5 pr-px pb-px">
        <ConsoleTree />
        <div className="ml-[3px] flex min-w-0 flex-1 flex-col border-t-2 border-r-2 border-b border-l-2 border-t-[#808080] border-r-white border-b-white border-l-[#808080]">
          <VolumeTable />
          <div className="h-2 shrink-0 border-t-2 border-b-2 border-t-[#f0f0f0] border-b-[#808080] shadow-[inset_0_1px_0_#fff,inset_0_2px_0_#e3e3e3]" />
          <div className="flex min-h-0 flex-1 flex-col overflow-hidden pt-1.5">
            {disks.map((disk) => (
              <DiskRow key={disk.name} disk={disk} />
            ))}
          </div>
          <Legend />
        </div>
        <div className="ml-[3px] flex">
          <ActionsPane />
        </div>
      </main>
      <div className="flex h-[22px] shrink-0 justify-end border-t border-b border-t-[#a0a0a0] border-b-white bg-[#f0edec] shadow-[inset_0_1px_0_#fff]">
        <span className="mt-px w-[133px] border-l border-[#d7d7d7]" />
        <span className="mt-px mr-0.5 w-[86px] border-r border-l border-[#d7d7d7]" />
      </div>
      <TaskBar />
      <MoveDialog />
    </div>
  )
}
